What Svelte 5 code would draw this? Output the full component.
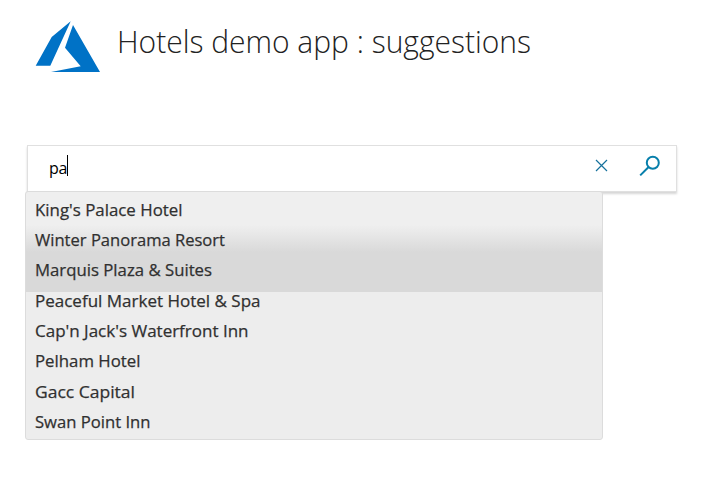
<script>
  const query = 'pa';
  const suggestions = [
    { name: "King's Palace Hotel", width: 147.5 },
    { name: 'Winter Panorama Resort', width: 190 },
    { name: 'Marquis Plaza & Suites', width: 177 },
    { name: 'Peaceful Market Hotel & Spa', width: 225.5 },
    { name: "Cap'n Jack's Waterfront Inn", width: 213.5 },
    { name: 'Pelham Hotel', width: 105.5 },
    { name: 'Gacc Capital', width: 100 },
    { name: 'Swan Point Inn', width: 115.5 }
  ];
</script>

<main>
  <header>
    <svg class="logo" viewBox="0 0 66 52" aria-hidden="true">
      <path d="M35.7 0.2 L16.7 16 L0.7 44.7 H15.3 Z M38 4 L30 26.7 L45.7 45.3 L16 50.9 H65 Z" />
    </svg>
    <h1>
      <svg width="420" height="44" role="img">
        <text x="0" y="31" textLength="414" lengthAdjust="spacingAndGlyphs">Hotels demo app : suggestions</text>
      </svg>
    </h1>
  </header>

  <div class="search">
    <div class="field"><span>{query}</span><i class="caret"></i></div>
    <svg class="clear" viewBox="0 0 13 13"><path d="M1 1 L12 12 M12 1 L1 12" /></svg>
    <svg class="find" viewBox="0 0 22 22"><circle cx="13.8" cy="7.8" r="6" /><path d="M9.4 12.2 L1.2 20.4" /></svg>
  </div>

  <ul>
    {#each suggestions as item}
      <li>
        <svg width="300" height="30">
          <text x="0" y="20" textLength={item.width} lengthAdjust="spacingAndGlyphs">{item.name}</text>
        </svg>
      </li>
    {/each}
  </ul>
</main>

<style>
  :global(body) {
    margin: 0;
    background: #fff;
  }
  main {
    box-sizing: border-box;
    width: 703px;
    height: 480px;
    padding: 21px 25px 0;
    overflow: hidden;
    font-family: 'Open Sans', 'Noto Sans', sans-serif;
  }
  header {
    display: flex;
    height: 124px;
    padding-left: 10px;
  }
  .logo {
    width: 66px;
    height: 52px;
    fill: #0072c6;
  }
  h1 {
    margin: 1px 0 0 16px;
    font-size: 32px;
    font-weight: 300;
    line-height: 1;
  }
  h1 svg,
  li svg {
    display: block;
    overflow: visible;
  }
  h1 text {
    fill: #222;
  }
  .search {
    box-sizing: border-box;
    display: flex;
    align-items: center;
    width: 650px;
    height: 47px;
    margin-left: 2px;
    padding: 0 15px 0 21px;
    border: 1px solid #e0e0e0;
    box-shadow: 0 2px 2px rgba(0, 0, 0, 0.16);
    background: #fff;
  }
  .field {
    display: flex;
    flex: 1;
    align-items: center;
    height: 40px;
    font-size: 16px;
    letter-spacing: -0.4px;
    color: #000;
  }
  .field span {
    position: relative;
    top: -1px;
  }
  .caret {
    width: 1px;
    height: 21px;
    margin-top: -6px;
    background: #000;
  }
  .clear {
    width: 13px;
    height: 13px;
    margin: -6px 31px 0 0;
    fill: none;
    stroke: #16719c;
    stroke-width: 1.2;
  }
  .find {
    width: 22px;
    height: 22px;
    margin-top: -5px;
    fill: none;
    stroke: #077fab;
    stroke-width: 2;
  }
  ul {
    position: relative;
    box-sizing: border-box;
    width: 578px;
    height: 249px;
    margin: -1px 0 0;
    padding: 3.83px 9px 0;
    list-style: none;
    border: 1px solid #dcdcdc;
    border-radius: 3px;
    background: linear-gradient(#efefef 0, #efefef 33px, #d9d9d9 60px, #d9d9d9 100px, #ededed 100px);
  }
  li {
    height: 30.34px;
    font-size: 17px;
    font-weight: 500;
  }
  li text {
    fill: #303030;
    stroke: #303030;
    stroke-width: 0.25px;
  }
</style>
